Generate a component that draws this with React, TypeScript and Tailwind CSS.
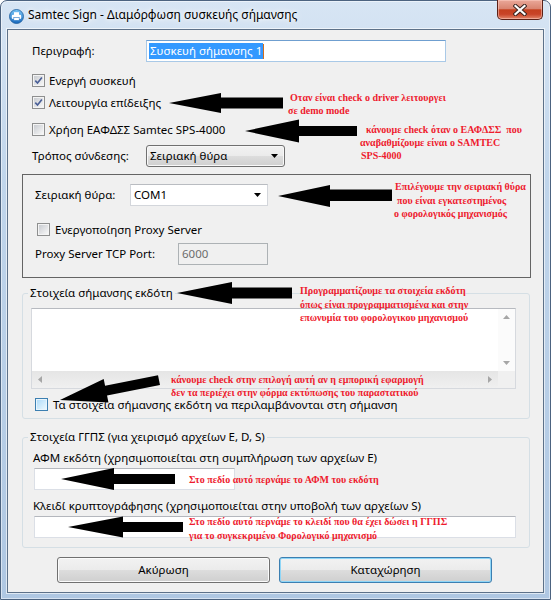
import React from 'react';

const ui = "font-['Noto_Sans',sans-serif] text-[11.5px] leading-[14px] text-black";
const note = "font-['Liberation_Serif',serif] text-[10px] font-bold text-[#ee1b2e] whitespace-pre";
const btnFace = 'bg-[linear-gradient(#f2f2f2_0%,#ebebeb_50%,#dddddd_50%,#cfcfcf_100%)]';

function Check({ checked = false, hot = false }: { checked?: boolean; hot?: boolean }) {
  return (
    <span
      className={`flex h-[13px] w-[13px] shrink-0 items-center justify-center border ${
        hot ? 'border-[#3c7fb1] bg-[#e8f5fd]' : 'border-[#8e8f8f] bg-[#f4f4f4]'
      }`}
    >
      <span
        className={`flex h-[9px] w-[9px] items-center justify-center ${
          hot
            ? 'bg-[linear-gradient(135deg,#b1dcf9,#e9f7fe)]'
            : 'bg-[linear-gradient(135deg,#c9ccd1,#f7f7f7)]'
        }`}
      >
        {checked && (
          <svg width="9" height="9" viewBox="0 0 9 9">
            <path d="M1.3 4.6 L3.5 7 L7.9 1.4" stroke="#4a5f97" strokeWidth="1.6" fill="none" />
          </svg>
        )}
      </span>
    </span>
  );
}

function Caret({ color = '#000' }: { color?: string }) {
  return (
    <svg width="7" height="4" viewBox="0 0 7 4" className="shrink-0">
      <polygon points="0,0 7,0 3.5,4" fill={color} />
    </svg>
  );
}

function ScrollArrow({ dir }: { dir: 'up' | 'down' | 'left' | 'right' }) {
  const pts = {
    up: '0,4 7,4 3.5,0',
    down: '0,0 7,0 3.5,4',
    left: '4,0 4,7 0,3.5',
    right: '0,0 0,7 4,3.5',
  }[dir];
  const vertical = dir === 'up' || dir === 'down';
  return (
    <svg width={vertical ? 7 : 4} height={vertical ? 4 : 7} viewBox={vertical ? '0 0 7 4' : '0 0 4 7'}>
      <polygon points={pts} fill="#a6a6a6" />
    </svg>
  );
}

function TextBox({ className = '' }: { className?: string }) {
  return <div className={`h-[22px] border border-[#dbdfe6] border-t-[#b4b7bd] bg-white ${className}`} />;
}

function Button({ label, isDefault = false }: { label: string; isDefault?: boolean }) {
  return (
    <div
      className={`flex h-[26px] w-[213px] items-center justify-center rounded-[3px] border ${btnFace} ${
        isDefault
          ? 'border-[#3c7fb1] shadow-[inset_0_0_0_1px_#8fd6f7]'
          : 'border-[#707070] shadow-[inset_0_0_0_1px_#fbfbfb]'
      }`}
    >
      {label}
    </div>
  );
}

function TitleIcon() {
  return (
    <svg width="15" height="15" viewBox="0 0 15 15" className="ml-[2px] mt-[8px] shrink-0">
      <defs>
        <linearGradient id="ti" x1="0" y1="0" x2="0" y2="1">
          <stop offset="0" stopColor="#7cc8f8" />
          <stop offset="1" stopColor="#1668be" />
        </linearGradient>
      </defs>
      <circle cx="7.5" cy="7.5" r="7" fill="url(#ti)" stroke="#1b5c9c" strokeWidth="0.8" />
      <rect x="5" y="3.2" width="5" height="3" fill="#fff" />
      <rect x="2.8" y="5.8" width="9.4" height="4.2" rx="1.2" fill="#fff" />
      <rect x="4.8" y="8.6" width="5.4" height="2.8" fill="#fff" stroke="#2a79c6" strokeWidth="0.6" />
    </svg>
  );
}

function CloseButton() {
  return (
    <div className="-mt-px ml-auto mr-px flex h-[20px] w-[46px] shrink-0 items-center justify-center rounded-b-[5px] border border-t-0 border-[#5b2117] bg-[linear-gradient(#eaa899_0%,#d98571_45%,#c5401f_52%,#c94428_75%,#e2866a_100%)] shadow-[inset_0_0_0_1px_rgba(255,210,200,0.5)]">
      <svg width="14" height="12" viewBox="0 0 14 12">
        <path d="M2.5 2 L11.5 10 M11.5 2 L2.5 10" stroke="#3b2520" strokeWidth="4.2" strokeLinecap="square" />
        <path d="M2.5 2 L11.5 10 M11.5 2 L2.5 10" stroke="#fff" strokeWidth="2.2" strokeLinecap="square" />
      </svg>
    </div>
  );
}

function Arrows() {
  return (
    <svg className="pointer-events-none absolute left-0 top-0" width="551" height="600">
      <g fill="#000">
        <polygon points="169,103 221,93 221,97.5 283,97.5 283,108.5 221,108.5 221,113" />
        <polygon points="245,131 299,119.5 299,126 357,126 357,136 299,136 299,142.5" />
        <polygon points="278,196 330,185 330,189.5 392,189.5 392,201 330,201 330,207" />
        <polygon points="177,293 232,282 232,287.5 292,287.5 292,298.5 232,298.5 232,304" />
        <polygon
          transform="translate(60,400) rotate(-11.4)"
          points="0,0 47,-12 47,-5 101,-5 101,5 47,5 47,12"
        />
        <polygon points="61,479 114,468 114,474 175,474 175,484 114,484 114,490" />
        <polygon points="68,527 123,516.5 123,522 183,522 183,532 123,532 123,537.5" />
      </g>
    </svg>
  );
}

function Notes() {
  return (
    <div className={`pointer-events-none absolute inset-0 ${note}`}>
      <div className="absolute left-[290px] top-[91px] leading-[13px]">
        <div>Οταν είναι check ο driver λειτουργει</div>
        <div className="-ml-[2px]">σε demo mode</div>
      </div>
      <div className="absolute left-[360px] top-[123px] leading-[13px]">
        <div className="ml-[6px]">κάνουμε check όταν ο ΕΑΦΔΣΣ  που</div>
        <div>αναβαθμίζουμε είναι ο SAMTEC</div>
        <div className="ml-px">SPS-4000</div>
      </div>
      <div className="absolute left-[394px] top-[180px] leading-[13.5px]">
        <div className="ml-px">Επιλέγουμε την σειριακή θύρα</div>
        <div className="ml-[3px]">που είναι εγκατεστημένος</div>
        <div>ο φορολογικός μηχανισμός</div>
      </div>
      <div className="absolute left-[300px] top-[284px] leading-[13.5px]">
        <div>Προγραμματίζουμε τα στοιχεία εκδότη</div>
        <div>όπως είναι προγραμματισμένα και στην</div>
        <div>επωνυμία του φορολογικου μηχανισμού</div>
      </div>
      <div className="absolute left-[171px] top-[374px] leading-[12.5px]">
        <div>κάνουμε check στην επιλογή αυτή αν η εμπορική εφαρμογή</div>
        <div>δεν τα περιέχει στην φόρμα εκτύπωσης του παραστατικού</div>
      </div>
      <div className="absolute left-[189px] top-[473px] leading-[13px]">
        Στο πεδίο αυτό περνάμε το ΑΦΜ του εκδότη
      </div>
      <div className="absolute left-[189px] top-[515px] leading-[14px]">
        <div>Στο πεδίο αυτό περνάμε το κλειδί που θα έχει δώσει η ΓΓΠΣ</div>
        <div>για το συγκεκριμένο Φορολογικό μηχανισμό</div>
      </div>
    </div>
  );
}

export default function App() {
  return (
    <div className={`relative h-[600px] w-[551px] overflow-hidden bg-white ${ui}`}>
      <div className="flex h-full w-full flex-col rounded-t-[7px] border border-[#4c6380] bg-[linear-gradient(#d7e5f4,#c0d5eb_30%,#afc7e2)] px-[6px] pb-[6px] shadow-[inset_0_0_0_1px_rgba(255,255,255,0.5)]">
        {/* title bar */}
        <div className="flex h-[28px] shrink-0 items-start">
          <TitleIcon />
          <span className="ml-[4px] mt-[7px] text-[12px] [text-shadow:0_0_8px_#fff,0_0_4px_#fff]">
            Samtec Sign - Διαμόρφωση συσκευής σήμανσης
          </span>
          <CloseButton />
        </div>

        {/* client area */}
        <div className="flex flex-1 flex-col border border-[#5d7189] bg-[#f0f0f0] shadow-[0_0_0_1px_rgba(255,255,255,0.6)]">
          <div className="ml-[24px] mt-[10px] flex h-[22px] items-center">
            <span className="w-[114px]">Περιγραφή:</span>
            <div className="flex h-[22px] w-[300px] items-center border border-[#a9c9e7] border-t-[#6f9fd0] bg-white pl-[2px]">
              <span className="bg-[#3399ff] px-px leading-[16px] text-white">Συσκευή σήμανσης 1</span>
              <span className="h-[15px] w-px bg-[#d26d1e]" />
            </div>
          </div>

          <div className="ml-[24px] mt-[12px] flex h-[13px] items-center gap-[4px]">
            <Check checked />
            <span>Ενεργή συσκευή</span>
          </div>
          <div className="ml-[24px] mt-[9px] flex h-[13px] items-center gap-[4px]">
            <Check checked />
            <span>Λειτουργία επίδειξης</span>
          </div>
          <div className="ml-[24px] mt-[14px] flex h-[13px] items-center gap-[4px]">
            <Check />
            <span>Χρήση ΕΑΦΔΣΣ Samtec SPS-4000</span>
          </div>

          <div className="ml-[24px] mt-[9px] flex h-[22px] items-center">
            <span className="w-[114px]">Τρόπος σύνδεσης:</span>
            <div className={`flex h-[22px] w-[139px] items-center justify-between rounded-[3px] border border-[#707070] pl-[3px] pr-[6px] ${btnFace} shadow-[inset_0_0_0_1px_#f8f8f8]`}>
              <span>Σειριακή θύρα</span>
              <Caret />
            </div>
          </div>

          {/* serial port panel */}
          <div className="ml-[14px] mt-[7px] flex h-[104px] w-[509px] shrink-0 flex-col border border-[#646464]">
            <div className="ml-[12px] mt-[9px] flex h-[22px] items-center">
              <span className="w-[95px]">Σειριακή θύρα:</span>
              <div className="flex h-[22px] w-[138px] items-center justify-between border border-[#d3d6db] border-t-[#b9bcc1] bg-white pl-[3px] pr-[6px]">
                <span>COM1</span>
                <Caret />
              </div>
            </div>
            <div className="ml-[14px] mt-[17px] flex h-[13px] items-center gap-[5px]">
              <Check />
              <span>Ενεργοποίηση Proxy Server</span>
            </div>
            <div className="ml-[12px] mt-[7px] flex h-[22px] items-center">
              <span className="w-[143px]">Proxy Server TCP Port:</span>
              <div className="flex h-[22px] w-[90px] items-center border border-[#adb2b5] bg-[#f0f0f0] pl-[3px] text-[#6d6d6d]">
                6000
              </div>
            </div>
          </div>

          {/* issuer */}
          <fieldset className="ml-[14px] mt-[8px] w-[508px] rounded-[3px] border border-[#d5dfe5] pb-[7px] pl-[5px]">
            <legend className="px-[2px]">Στοιχεία σήμανσης εκδότη</legend>
            <div className="ml-[3px] mt-[8px] flex h-[81px] w-[485px] flex-col border border-[#d6d9de] border-t-[#b7bac0] bg-white">
              <div className="flex flex-1">
                <div className="flex-1" />
                <div className="flex w-[17px] flex-col items-center justify-between bg-[#fbfbfb] py-[6px]">
                  <ScrollArrow dir="up" />
                  <ScrollArrow dir="down" />
                </div>
              </div>
              <div className="flex h-[17px]">
                <div className="flex flex-1 items-center justify-between bg-[linear-gradient(#e5e5e5,#f0f0f0)] px-[6px]">
                  <ScrollArrow dir="left" />
                  <ScrollArrow dir="right" />
                </div>
                <div className="w-[17px] bg-[#f0f0f0]" />
              </div>
            </div>
            <div className="ml-[7px] mt-[9px] flex h-[13px] items-center gap-[5px]">
              <Check hot />
              <span>Τα στοιχεία σήμανσης εκδότη να περιλαμβάνονται στη σήμανση</span>
            </div>
          </fieldset>

          {/* GGPS */}
          <fieldset className="ml-[14px] mt-[11px] w-[508px] rounded-[3px] border border-[#d5dfe5] pb-[9px] pl-[5px]">
            <legend className="px-[2px]">Στοιχεία ΓΓΠΣ (για χειρισμό αρχείων Ε, D, S)</legend>
            <div className="ml-[5px] mt-[7px]">ΑΦΜ εκδότη (χρησιμοποιείται στη συμπλήρωση των αρχείων Ε)</div>
            <TextBox className="ml-[6px] mt-[3px] w-[201px]" />
            <div className="ml-[5px] mt-[9px]">Κλειδί κρυπτογράφησης (χρησιμοποιείται στην υποβολή των αρχείων S)</div>
            <TextBox className="ml-[6px] mt-[3px] w-[482px]" />
          </fieldset>

          <div className="ml-[49px] mt-[9px] flex gap-[9px]">
            <Button label="Ακύρωση" />
            <Button label="Καταχώρηση" isDefault />
          </div>
        </div>
      </div>

      <Arrows />
      <Notes />
    </div>
  );
}
